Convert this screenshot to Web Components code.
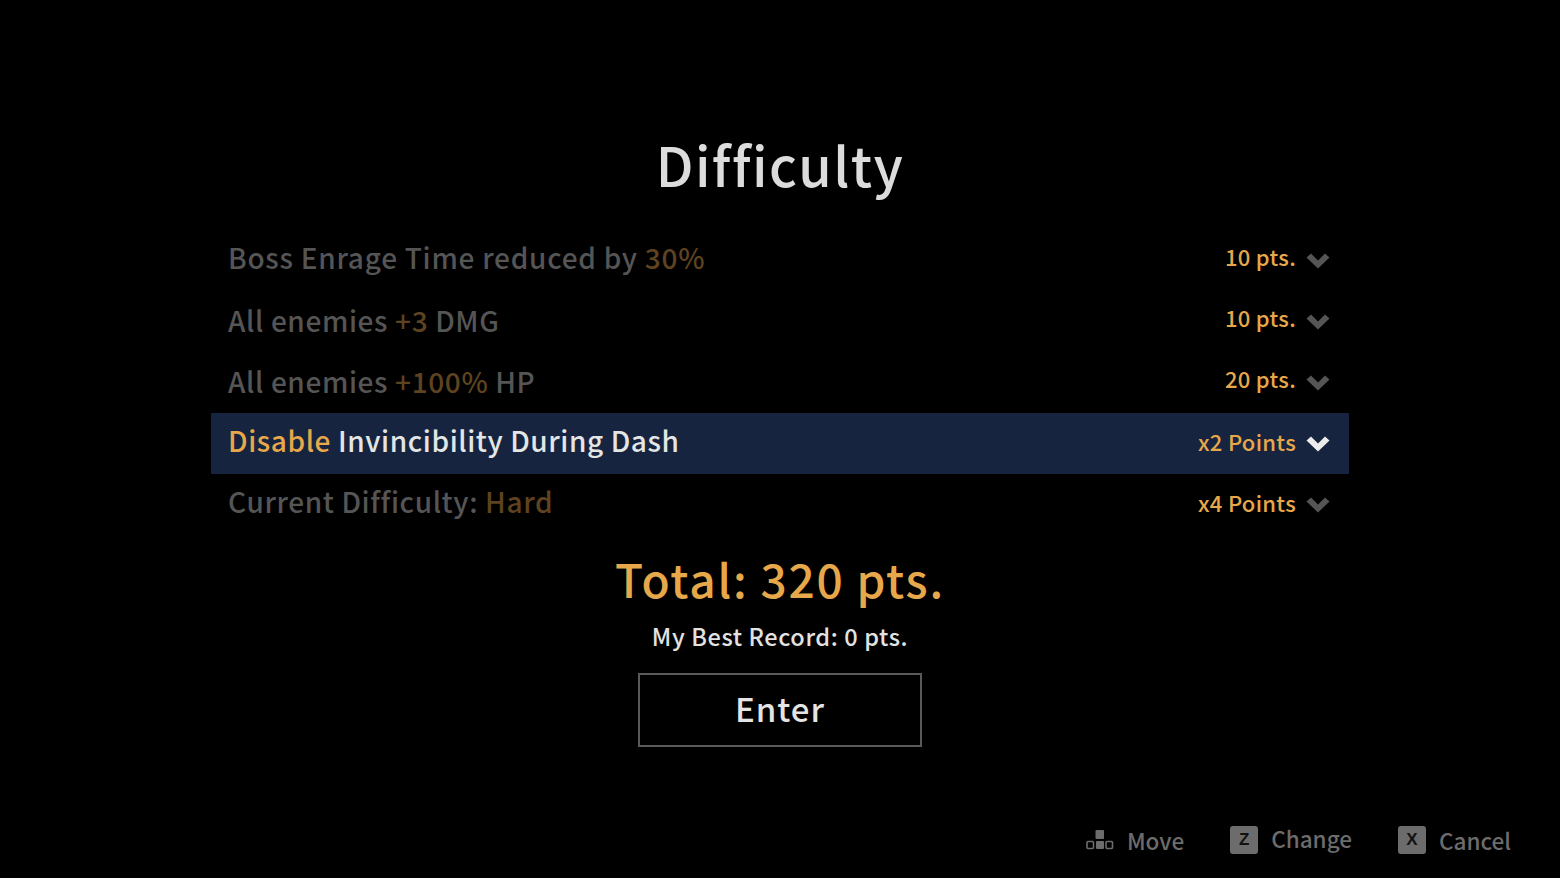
<!DOCTYPE html>
<html><head><meta charset="utf-8"><style>
html,body{margin:0;height:100%;background:#000}
body{font-family:"Noto Sans CJK JP","Noto Sans",sans-serif;font-weight:500}
diff-row b{font-weight:inherit;color:var(--a)}
.k{width:28px;height:28px;background:#6c6c6c;border-radius:3px;color:#111;display:flex;align-items:center;justify-content:center;font:700 17px "Liberation Sans",sans-serif}
</style></head><body>
<template id="t-row"><style>
:host{display:flex;align-items:center;height:61px;padding:0 18px 0 17px;color:var(--c,#555);--a:var(--ac,#5e4320)}
:host([active]){background:#17243f;--c:#e4e6e6;--ac:#e6a84a}
.l{flex:1;font-size:28px;letter-spacing:var(--ls,.62px);white-space:nowrap;padding-bottom:var(--lb,0)}
.r{font-size:22px;letter-spacing:.3px;color:#e6a84a;white-space:nowrap;padding-bottom:var(--rb,0)}
.ch{width:26px;height:20px;margin-left:9px;display:block}
:host([active]) .ch{color:#ececec}
</style><div class="l"><slot></slot></div><div class="r"><slot name="pts"></slot></div>
<svg class="ch" viewBox="0 0 26 20"><path d="M1.500 6.500 L6 2.500 L13 9.500 L20 2.500 L24.500 6.500 L13 17.500 Z" fill="currentColor"/></svg></template>
<template id="t-hint"><style>
:host{display:flex;align-items:center;gap:13px;color:#6c6c6c;font-size:22.500px;letter-spacing:0;line-height:30px}
.t{padding-bottom:var(--tb,0)}
</style><slot name="icon"></slot><span class="t"><slot></slot></span></template>
<template id="t-screen"><style>
:host{display:flex;flex-direction:column;align-items:center;height:878px;box-sizing:border-box;padding-top:130px}
h1{margin:0;font-weight:500;font-size:54px;line-height:68px;letter-spacing:1.4px;color:#dcdcdc;height:100px}
.list{width:1138px;display:flex;flex-direction:column}
.total{font-size:46px;line-height:60px;letter-spacing:1.75px;color:#e6a84a;margin-top:13px}
.best{font-size:23.500px;line-height:34px;letter-spacing:.6px;color:#e2e2e2;margin-top:11px}
.foot{align-self:stretch;display:flex;justify-content:flex-end;gap:46px;padding-right:49px;margin-top:auto;height:76px}
</style><h1><slot name="title"></slot></h1><div class="list"><slot name="rows"></slot></div>
<div class="total"><slot name="total"></slot></div><div class="best"><slot name="best"></slot></div>
<slot name="btn"></slot><div class="foot"><slot name="foot"></slot></div></template>
<template id="t-btn"><style>
:host{display:flex;align-items:center;justify-content:center;box-sizing:border-box;width:284px;height:74px;margin-top:20px;padding-bottom:4px;border:2px solid #5a5a5a;color:#e4e4e4;font-size:33px;letter-spacing:1px}
</style><slot></slot></template>

<game-screen>
<span slot="title">Difficulty</span>
<diff-row slot="rows" style="--lb:8px;--rb:9px;--ls:.74px"><span>Boss Enrage Time reduced by <b>30%</b></span><span slot="pts">10 pts.</span></diff-row>
<diff-row slot="rows" style="--lb:3px;--rb:9px"><span>All enemies <b>+3</b> DMG</span><span slot="pts">10 pts.</span></diff-row>
<diff-row slot="rows" style="--lb:3px;--rb:9px"><span>All enemies <b>+100%</b> HP</span><span slot="pts">20 pts.</span></diff-row>
<diff-row slot="rows" active style="--lb:8px;--rb:6px;--ls:.58px"><span><b>Disable</b> Invincibility During Dash</span><span slot="pts">x2 Points</span></diff-row>
<diff-row slot="rows" style="--lb:8px;--rb:6px"><span>Current Difficulty: <b>Hard</b></span><span slot="pts">x4 Points</span></diff-row>
<span slot="total">Total: 320 pts.</span>
<span slot="best">My Best Record: 0 pts.</span>
<game-btn slot="btn">Enter</game-btn>
<key-hint slot="foot"><svg slot="icon" width="28" height="22" viewBox="0 0 28 22"><rect x="9.500" y="1" width="8.500" height="9" rx="1" fill="#6c6c6c"/><rect x="1" y="12.500" width="6.500" height="7" rx="1" fill="none" stroke="#6c6c6c" stroke-width="1.600"/><rect x="10" y="12" width="8" height="8" rx="1" fill="#6c6c6c"/><rect x="20" y="12.500" width="6.500" height="7" rx="1" fill="none" stroke="#6c6c6c" stroke-width="1.600"/></svg>Move</key-hint>
<key-hint slot="foot" style="--tb:4px"><span slot="icon" class="k">Z</span>Change</key-hint>
<key-hint slot="foot"><span slot="icon" class="k">X</span>Cancel</key-hint>
</game-screen>
<script>
for(const [n,t] of [['diff-row','t-row'],['key-hint','t-hint'],['game-screen','t-screen'],['game-btn','t-btn']]){
customElements.define(n,class extends HTMLElement{constructor(){super();this.attachShadow({mode:'open'}).append(document.getElementById(t).content.cloneNode(true))}})}
</script></body></html>
